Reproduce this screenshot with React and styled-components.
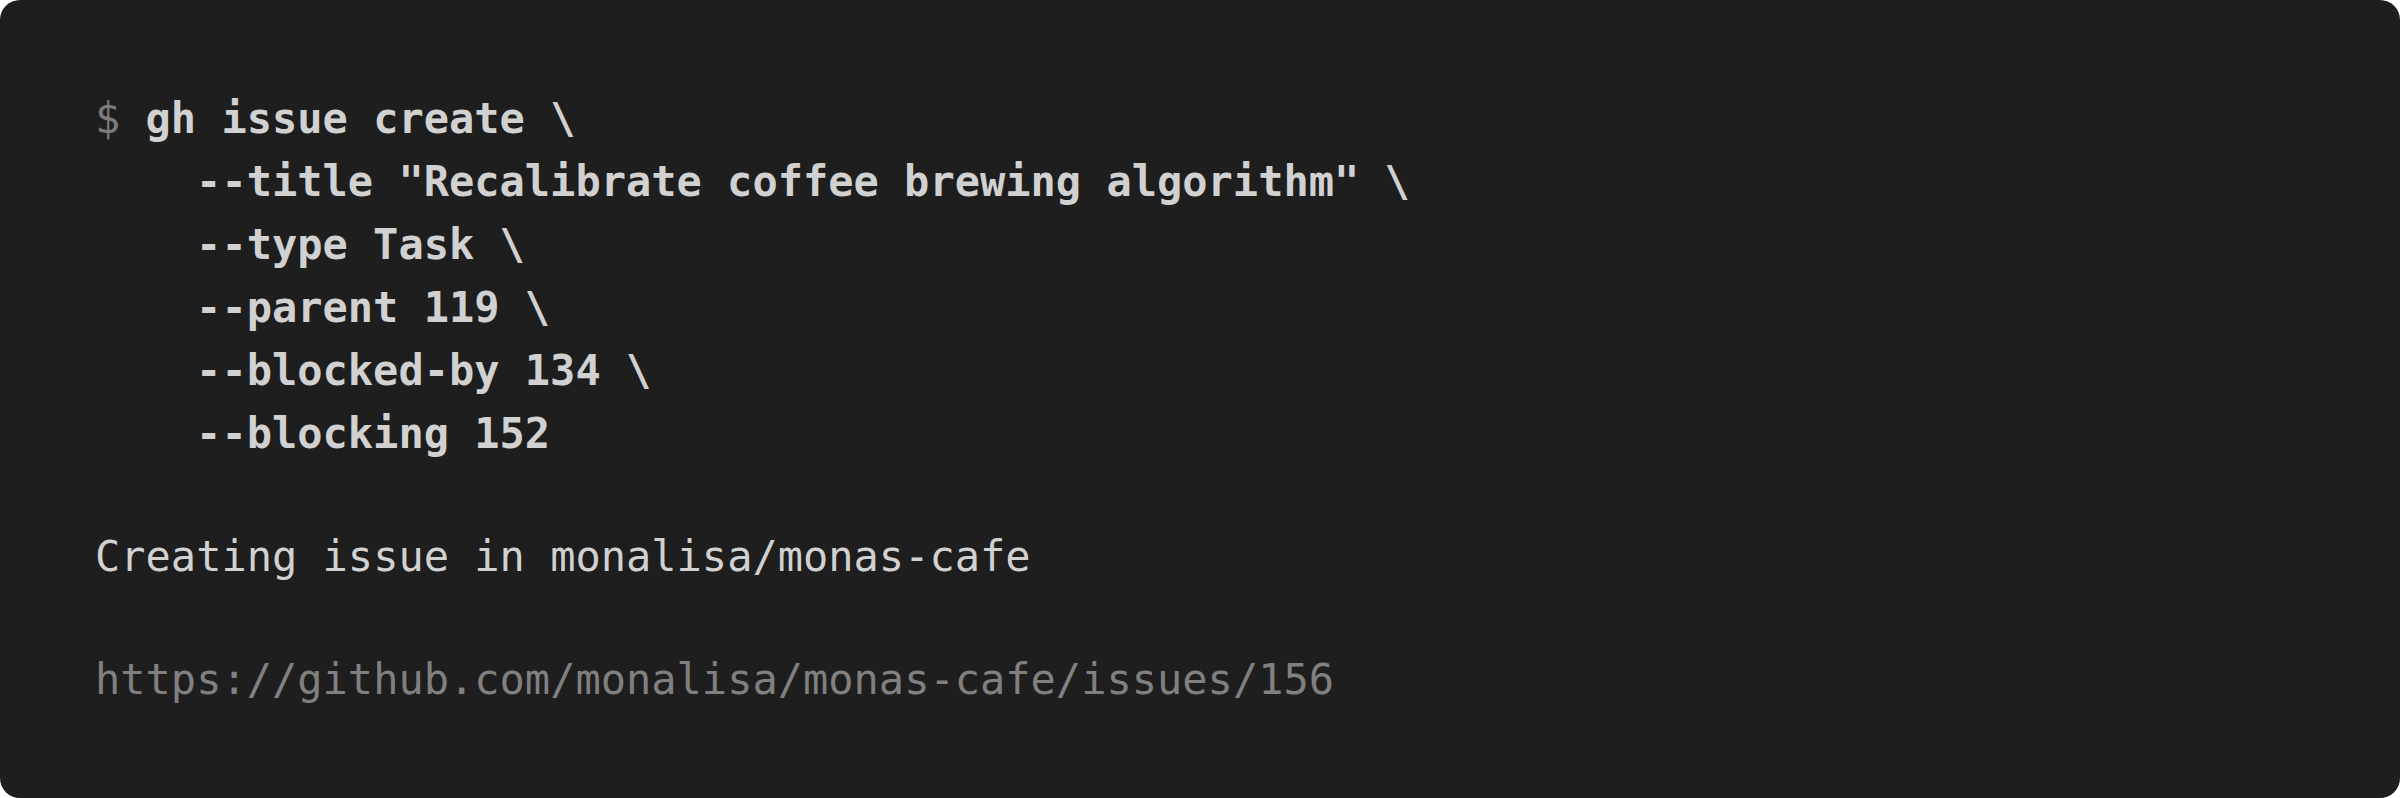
import React from "react";
import styled, { createGlobalStyle } from "styled-components";

const Global = createGlobalStyle`
  html, body { margin: 0; padding: 0; background: #ffffff; }
  #root { width: 2400px; height: 798px; }
`;

const Terminal = styled.div`
  box-sizing: border-box;
  width: 2400px;
  height: 798px;
  background: #1e1e1e;
  border-radius: 20px;
  padding: 87px 95px;
  font-family: "DejaVu Sans Mono", "Liberation Mono", monospace;
  font-size: 42px;
  line-height: 63px;
  color: #d1d1d1;
  display: flex;
  flex-direction: column;
`;

const Line = styled.div`
  white-space: pre;
  height: 63px;
  padding-left: ${(p) => (p.$indent ? p.$indent * 25.28 : 0)}px;
  font-weight: ${(p) => (p.$bold ? 700 : 400)};
  color: ${(p) => (p.$muted ? "#808080" : "#d1d1d1")};
`;

const Prompt = styled.span`
  color: #7c7c7c;
  font-weight: 400;
`;

const commandArgs = [
  '--title "Recalibrate coffee brewing algorithm" \\',
  "--type Task \\",
  "--parent 119 \\",
  "--blocked-by 134 \\",
  "--blocking 152",
];

export default function App() {
  return (
    <>
      <Global />
      <Terminal>
        <Line $bold>
          <Prompt>$ </Prompt>
          {"gh issue create \\"}
        </Line>
        {commandArgs.map((arg) => (
          <Line key={arg} $bold $indent={4}>
            {arg}
          </Line>
        ))}
        <Line />
        <Line>Creating issue in monalisa/monas-cafe</Line>
        <Line />
        <Line $muted>https://github.com/monalisa/monas-cafe/issues/156</Line>
      </Terminal>
    </>
  );
}
